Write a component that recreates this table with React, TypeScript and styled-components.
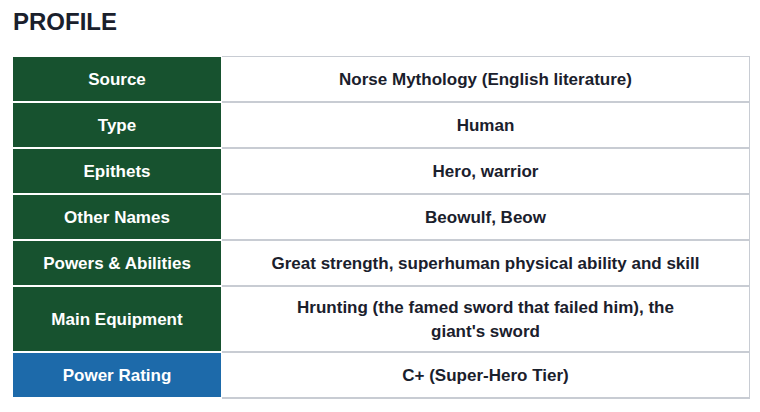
import styled, { createGlobalStyle } from "styled-components";

const GlobalStyle = createGlobalStyle`
  html, body {
    margin: 0;
    padding: 0;
    background: #fff;
  }
  body {
    font-family: "Liberation Sans", Arial, sans-serif;
    color: #1a202c;
  }
`;

const Page = styled.div`
  padding: 8px 10px 0 13px;
`;

const Title = styled.h2`
  margin: 0 0 20px 0;
  font-size: 24px;
  font-weight: 700;
  line-height: 28px;
  color: #1a202c;
`;

const Table = styled.table`
  width: 737px;
  border-collapse: collapse;
  border-spacing: 0;
`;

const Label = styled.th<{ $tone?: "green" | "blue" }>`
  width: 208px;
  padding: 2px 0 0 0;
  height: 42px;
  background: ${(p) => (p.$tone === "blue" ? "#1d6aaa" : "#17522f")};
  color: #fff;
  font-size: 17px;
  font-weight: 700;
  text-align: center;
  border-bottom: 2px solid #fff;
  border-right: 1px solid #fff;
`;

const Value = styled.td`
  padding: 9px 46px 7px;
  text-align: center;
  font-size: 17px;
  font-weight: 700;
  line-height: 24px;
  color: #1a202c;
  border: 1px solid #c8ccd3;
  border-bottom-width: 2px;
`;

const rows: { label: string; value: string; tone?: "green" | "blue" }[] = [
  { label: "Source", value: "Norse Mythology (English literature)" },
  { label: "Type", value: "Human" },
  { label: "Epithets", value: "Hero, warrior" },
  { label: "Other Names", value: "Beowulf, Beow" },
  { label: "Powers & Abilities", value: "Great strength, superhuman physical ability and skill" },
  { label: "Main Equipment", value: "Hrunting (the famed sword that failed him), the giant's sword" },
  { label: "Power Rating", value: "C+ (Super-Hero Tier)", tone: "blue" },
];

export default function App() {
  return (
    <Page>
      <GlobalStyle />
      <Title>PROFILE</Title>
      <Table>
        <tbody>
          {rows.map((r) => (
            <tr key={r.label}>
              <Label $tone={r.tone}>{r.label}</Label>
              <Value>{r.value}</Value>
            </tr>
          ))}
        </tbody>
      </Table>
    </Page>
  );
}
